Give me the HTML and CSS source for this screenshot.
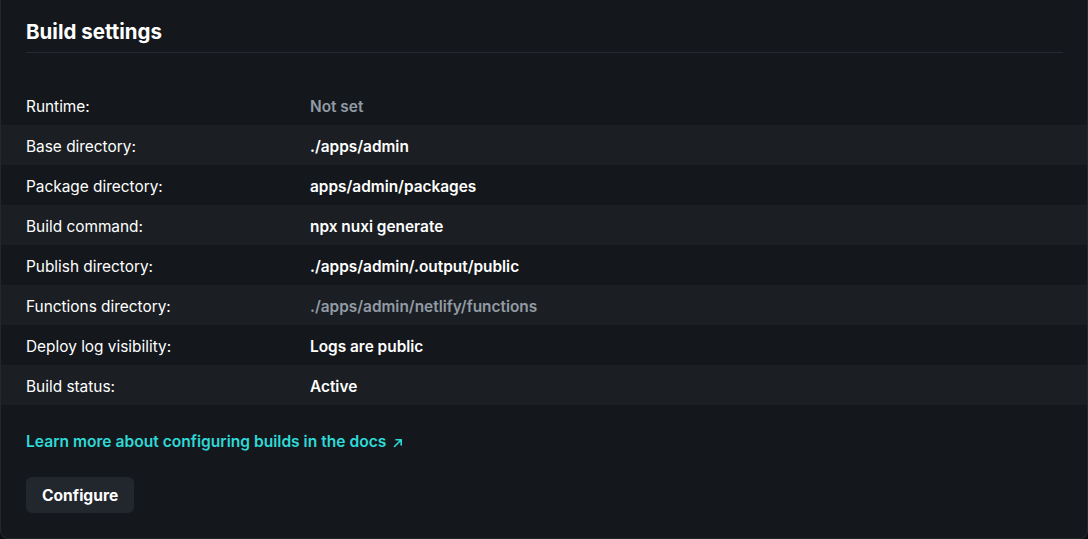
FILE: index.html
```html
<!DOCTYPE html>
<html lang="en">
<head>
<meta charset="utf-8">
<title>Build settings</title>
<link rel="stylesheet" href="styles.css">
</head>
<body>
<section class="card">
  <h2 class="card-title">Build settings</h2>
  <dl class="settings">
    <div class="row"><dt>Runtime:</dt><dd class="muted">Not set</dd></div>
    <div class="row"><dt>Base directory:</dt><dd>./apps/admin</dd></div>
    <div class="row"><dt>Package directory:</dt><dd>apps/admin/packages</dd></div>
    <div class="row"><dt>Build command:</dt><dd>npx nuxi generate</dd></div>
    <div class="row"><dt>Publish directory:</dt><dd>./apps/admin/.output/public</dd></div>
    <div class="row"><dt>Functions directory:</dt><dd class="muted">./apps/admin/netlify/functions</dd></div>
    <div class="row"><dt>Deploy log visibility:</dt><dd>Logs are public</dd></div>
    <div class="row"><dt>Build status:</dt><dd>Active</dd></div>
  </dl>
  <a class="docs-link" href="#">Learn more about configuring builds in the docs <svg class="ext" width="12" height="12" viewBox="0 0 12 12" aria-hidden="true"><path d="M2.5 9.5L9 3M4 2.8h5.2V8" fill="none" stroke="currentColor" stroke-width="1.6" stroke-linecap="round" stroke-linejoin="round"/></svg></a>
  <div class="actions"><button class="btn" type="button">Configure</button></div>
</section>
</body>
</html>
```

FILE: styles.css
```css
html, body {
  margin: 0;
  padding: 0;
  background: #0b0d10;
}
body {
  font-family: Inter, "Noto Sans", "Liberation Sans", sans-serif;
  color: #ffffff;
  height: 539px;
  overflow: hidden;
}
.card {
  box-sizing: border-box;
  width: 1088px;
  height: 539px;
  background: #14181c;
  border: 1px solid #23282e;
  border-top: none;
  border-radius: 0 0 8px 8px;
  padding: 18px 25px 0 25px;
}
.card-title {
  margin: 0;
  font-size: 20.5px;
  line-height: 28px;
  font-weight: 700;
  padding-bottom: 6px;
  border-bottom: 1px solid #262b31;
  margin-right: -1px;
}
.settings {
  margin: 32px -25px 0 -25px;
  padding: 0;
}
.row {
  display: grid;
  grid-template-columns: 284px 1fr;
  align-items: center;
  box-sizing: border-box;
  height: 40px;
  padding: 2px 25px 0 25px;
  font-size: 15.4px;
}
.row:nth-child(even) {
  background: #1b1f23;
}
.row dt {
  margin: 0;
  font-weight: 400;
  color: #ffffff;
}
.row dd {
  margin: 0;
  font-weight: 600;
  color: #ffffff;
}
.row dd.muted {
  color: #929ba5;
}
.docs-link {
  display: inline-flex;
  align-items: center;
  gap: 6px;
  margin-top: 25px;
  line-height: 24px;
  font-size: 15.6px;
  font-weight: 600;
  color: #2fd9d7;
  text-decoration: none;
}
.ext {
  display: block;
  margin-top: 1px;
}
.actions {
  margin-top: 23px;
}
.btn {
  height: 36px;
  padding: 0 16px;
  border: none;
  border-radius: 6px;
  background: #22272e;
  color: #ffffff;
  font-family: inherit;
  font-size: 15.6px;
  font-weight: 700;
}
```
